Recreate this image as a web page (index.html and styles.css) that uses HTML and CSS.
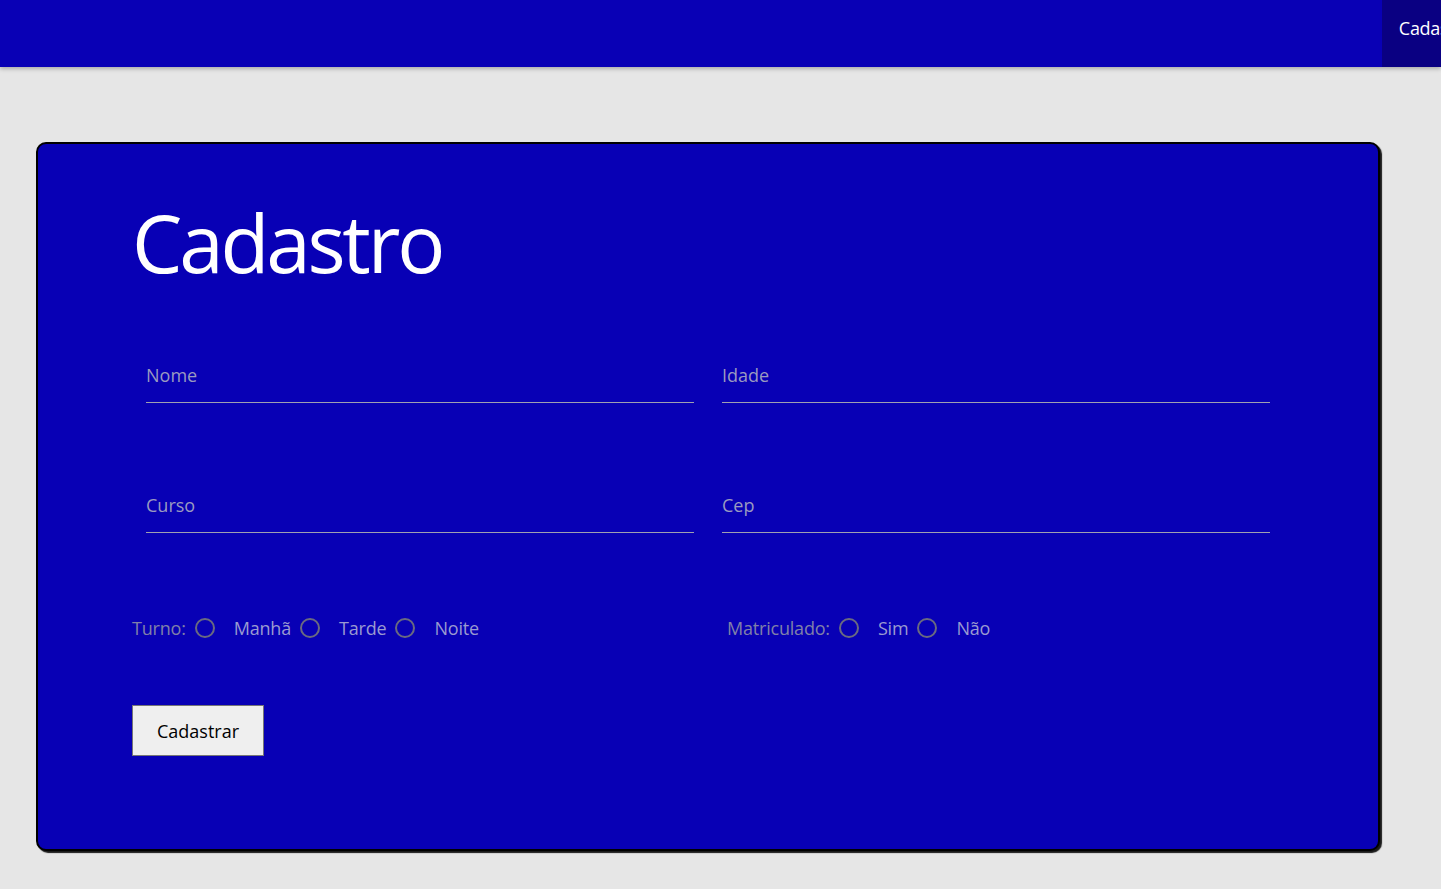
FILE: index.html
```html
<!DOCTYPE html>
<html lang="pt-BR">
<head>
<meta charset="utf-8">
<title>Cadastro</title>
<link rel="stylesheet" href="styles.css">
</head>
<body>
<header class="topbar">
  <nav class="nav">
    <a class="nav-item" href="#">Cadastro</a>
  </nav>
</header>
<main class="card">
  <h1 class="title">Cadastro</h1>
  <form class="form">
    <div class="grid">
      <div class="field"><input class="text-input" type="text" placeholder="Nome"></div>
      <div class="field"><input class="text-input" type="text" placeholder="Idade"></div>
      <div class="field"><input class="text-input" type="text" placeholder="Curso"></div>
      <div class="field"><input class="text-input" type="text" placeholder="Cep"></div>
    </div>
    <div class="radios">
      <div class="group">
        <span class="group-label">Turno:</span>
        <input class="radio" type="radio" name="turno"><span class="opt">Manhã</span>
        <input class="radio" type="radio" name="turno"><span class="opt">Tarde</span>
        <input class="radio" type="radio" name="turno"><span class="opt">Noite</span>
      </div>
      <div class="group group-right">
        <span class="group-label">Matriculado:</span>
        <input class="radio" type="radio" name="mat"><span class="opt">Sim</span>
        <input class="radio" type="radio" name="mat"><span class="opt">Não</span>
      </div>
    </div>
    <button class="btn" type="button">Cadastrar</button>
  </form>
</main>
</body>
</html>
```
FILE: styles.css
```css
html, body {
  margin: 0;
  padding: 0;
}
body {
  background: #e6e6e6;
  font-family: "Open Sans", "Noto Sans", sans-serif;
  overflow: hidden;
  height: 889px;
}
.topbar {
  height: 67px;
  background: #0900b5;
  display: flex;
  justify-content: flex-end;
  overflow: hidden;
  box-shadow: 0 2px 4px rgba(0,0,0,0.25);
  position: relative;
}
.nav {
  display: flex;
  margin-right: -48px;
}
.nav-item {
  display: flex;
  align-items: center;
  height: 56px;
  padding: 0 17px 11px 17px;
  background: #0a0082;
  color: #fff;
  text-decoration: none;
  font-size: 18px;
  letter-spacing: -0.3px;
}
.card {
  margin: 75px 61px 0 36px;
  height: 709px;
  box-sizing: border-box;
  border: 2px solid #000;
  border-radius: 10px;
  background: #0800b5;
  box-shadow: 2px 2px 1px #1a1a1a;
  padding: 0 94px 0 94px;
}
.title {
  margin: 48px 0 0 0;
  font-size: 80px;
  line-height: 100px;
  font-weight: 400;
  letter-spacing: -3.2px;
  color: #fff;
}
.form {
  margin-top: 56px;
}
.grid {
  display: grid;
  grid-template-columns: 1fr 1fr;
  row-gap: 75px;
}
.field {
  padding: 0 14px;
}
.text-input {
  display: block;
  width: 100%;
  box-sizing: border-box;
  height: 55px;
  padding: 0;
  border: none;
  border-bottom: 1px solid #a0a0b0;
  background: transparent;
  font-family: inherit;
  font-size: 18px;
  color: #fff;
  outline: none;
}
.text-input::placeholder {
  color: #9a9ac0;
}
.radios {
  display: grid;
  grid-template-columns: 1fr 1fr;
  margin-top: 83px;
  height: 24px;
}
.group {
  display: flex;
  align-items: center;
  font-size: 18px;
  letter-spacing: -0.2px;
}
.group-right {
  padding-left: 19px;
}
.group-label {
  color: #8080a8;
}
.opt {
  color: #9a9ad0;
}
.radio {
  appearance: none;
  -webkit-appearance: none;
  width: 20px;
  height: 20px;
  box-sizing: border-box;
  border: 2px solid #6a6a80;
  border-radius: 50%;
  margin: 0 19px 0 9px;
  background: transparent;
}
.btn {
  margin-top: 65px;
  width: 132px;
  height: 51px;
  background: #efefef;
  border: 1px solid #767676;
  font-family: inherit;
  font-size: 18px;
  color: #000;
  padding: 0;
}
```
